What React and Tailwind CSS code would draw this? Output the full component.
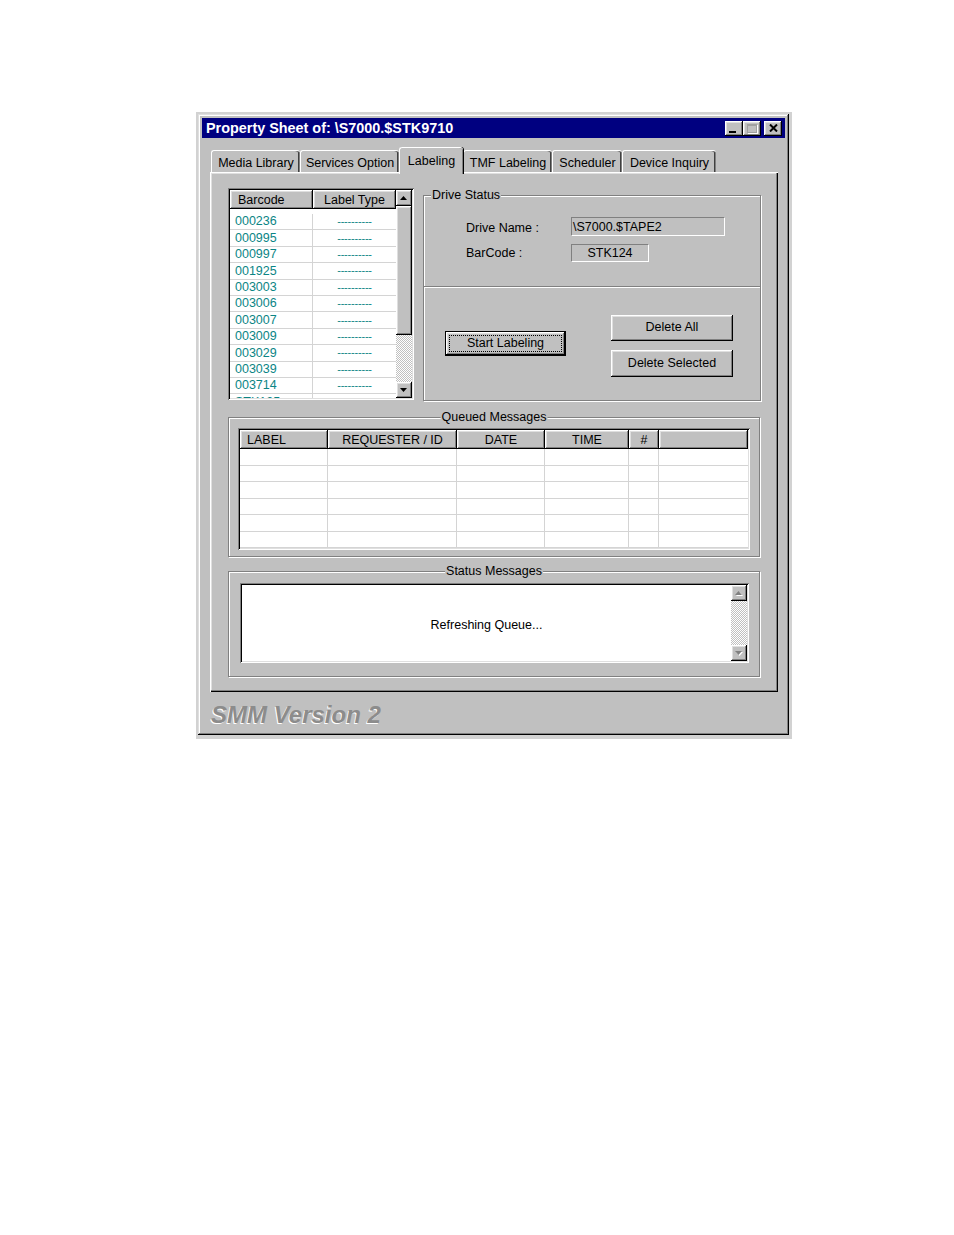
const raised =
  'shadow-[inset_-1px_-1px_0_#000,inset_1px_1px_0_#fff,inset_-2px_-2px_0_#808080,inset_2px_2px_0_#dfdfdf]'
const sunken =
  'shadow-[inset_1px_1px_0_#808080,inset_-1px_-1px_0_#fff,inset_2px_2px_0_#000,inset_-2px_-2px_0_#dfdfdf]'
const etched = 'border border-[#808080] shadow-[inset_1px_1px_0_#fff,1px_1px_0_#fff]'
const dither =
  'bg-[image:repeating-conic-gradient(#c0c0c0_0_25%,#ffffff_0_50%)] bg-[length:2px_2px]'

const tabs = [
  { label: 'Media Library', w: 'w-[89px]' },
  { label: 'Services Option', w: 'w-[99px]' },
  { label: 'Labeling', w: 'w-[64px]', active: true },
  { label: 'TMF Labeling', w: 'w-[89px]' },
  { label: 'Scheduler', w: 'w-[70px]' },
  { label: 'Device Inquiry', w: 'w-[94px]' },
]

const barcodes = [
  '000236', '000995', '000997', '001925', '003003', '003006',
  '003007', '003009', '003029', '003039', '003714', 'STK125',
]

const queuedCols = [
  { label: 'LABEL', w: 'w-[88px]', left: true },
  { label: 'REQUESTER / ID', w: 'w-[129px]' },
  { label: 'DATE', w: 'w-[88px]' },
  { label: 'TIME', w: 'w-[84px]' },
  { label: '#', w: 'w-[30px]' },
  { label: '', w: 'flex-1' },
]

function Arrow({ up, disabled }) {
  const d = up ? 'M3.5 0L7 4H0z' : 'M0 0h7L3.5 4z'
  return (
    <svg width="8" height="5" viewBox="0 0 8 5">
      {disabled && <path d={d} transform="translate(1 1)" fill="#fff" />}
      <path d={d} fill={disabled ? '#808080' : '#000'} />
    </svg>
  )
}

function ScrollBtn({ up, disabled }) {
  return (
    <div className={`flex h-[16px] w-[16px] shrink-0 items-center justify-center bg-[#c0c0c0] ${raised}`}>
      <Arrow up={up} disabled={disabled} />
    </div>
  )
}

function GroupBox({ title, center, className, children }) {
  return (
    <div className={`relative ${etched} ${className}`}>
      <span
        className={`absolute -top-[9px] bg-[#c0c0c0] px-[1px] leading-[16px] ${
          center ? 'left-1/2 -translate-x-1/2' : 'left-[7px]'
        }`}
      >
        {title}
      </span>
      {children}
    </div>
  )
}

function Button({ children, className, isDefault }) {
  if (isDefault) {
    return (
      <div className={`flex border border-black bg-[#c0c0c0] ${className}`}>
        <div className={`flex flex-1 p-[3px] ${raised}`}>
          <div className="flex flex-1 items-center justify-center border border-dotted border-black">
            {children}
          </div>
        </div>
      </div>
    )
  }
  return (
    <div className={`flex items-center justify-center bg-[#c0c0c0] ${raised} ${className}`}>
      {children}
    </div>
  )
}

function TitleBar() {
  return (
    <div className="flex h-[20px] items-center justify-between bg-[#000080] pl-[4px] pr-[3px]">
      <span className="text-[14.4px] font-bold leading-none text-white">
        Property Sheet of: \S7000.$STK9710
      </span>
      <div className="flex items-center">
        <div className={`flex h-[15px] w-[18px] items-end bg-[#c0c0c0] pb-[3px] pl-[4px] ${raised}`}>
          <div className="h-[2px] w-[7px] bg-black" />
        </div>
        <div className={`flex h-[15px] w-[18px] items-center justify-center bg-[#c0c0c0] ${raised}`}>
          <div className="h-[9px] w-[10px] border border-t-2 border-[#a0a0a0] shadow-[1px_1px_0_#fff]" />
        </div>
        <div className={`ml-[3px] flex h-[15px] w-[18px] items-center justify-center bg-[#c0c0c0] ${raised}`}>
          <svg width="9" height="8" viewBox="0 0 9 8">
            <path d="M1 0.5L8 7.5M8 0.5L1 7.5" stroke="#000" strokeWidth="2" />
          </svg>
        </div>
      </div>
    </div>
  )
}

function Tabs() {
  return (
    <div className="ml-[9px] mt-[9px] flex h-[25px] items-end">
      {tabs.map((t) =>
        t.active ? (
          <div
            key={t.label}
            className={`relative z-10 -mb-[2px] flex h-[27px] items-start justify-center rounded-t-[3px] border-l border-t border-white bg-[#c0c0c0] pt-[4px] shadow-[inset_-1px_0_0_#808080,1px_0_0_#000] ${t.w}`}
          >
            {t.label}
          </div>
        ) : (
          <div
            key={t.label}
            className={`flex h-[22px] items-center justify-center rounded-t-[3px] border-l border-t border-white bg-[#c0c0c0] pt-[3px] shadow-[inset_-1px_0_0_#808080,inset_-2px_0_0_#404040] ${t.w}`}
          >
            {t.label}
          </div>
        )
      )}
    </div>
  )
}

function BarcodeList() {
  return (
    <div className={`flex h-[212px] w-[186px] shrink-0 bg-white p-[2px] ${sunken}`}>
      <div className="flex w-[166px] flex-col overflow-hidden">
        <div className="flex h-[19px] shrink-0">
          <div className={`flex w-[83px] items-center bg-[#c0c0c0] pl-[8px] pt-[2px] ${raised}`}>Barcode</div>
          <div className={`flex w-[83px] items-center justify-center bg-[#c0c0c0] pt-[2px] ${raised}`}>Label Type</div>
        </div>
        <div className="pt-[5px]">
          {barcodes.map((b) => (
            <div key={b} className="flex h-[16.4px] border-b border-[#d4d4d4] text-[#0b8585]">
              <div className="flex w-[83px] items-center border-r border-[#d4d4d4] pl-[5px] leading-none">{b}</div>
              <div className="flex w-[83px] items-center justify-center text-[11px] leading-none tracking-[-0.2px]">
                ----------
              </div>
            </div>
          ))}
        </div>
      </div>
      <div className="flex w-[16px] flex-col">
        <ScrollBtn up />
        <div className={`h-[129px] bg-[#c0c0c0] ${raised}`} />
        <div className={`flex-1 ${dither}`} />
        <ScrollBtn />
      </div>
    </div>
  )
}

function DriveStatus() {
  return (
    <div className={`relative ml-[9px] mt-[7px] flex h-[206px] w-[338px] flex-col ${etched}`}>
      <span className="absolute -top-[9px] left-[7px] bg-[#c0c0c0] px-[1px] leading-[16px]">Drive Status</span>
      <div className="h-[91px] border-b border-[#808080] shadow-[0_1px_0_#fff]">
        <div className="grid grid-cols-[105px_auto] gap-y-[8px] pl-[42px] pt-[21px]">
          <div className="flex h-[19px] items-center pt-[3px]">Drive Name :</div>
          <div className="flex h-[19px] w-[154px] items-center border border-b-white border-l-[#808080] border-r-white border-t-[#808080] pl-[1px] pt-[1px]">
            \S7000.$TAPE2
          </div>
          <div className="flex h-[18px] items-center">BarCode :</div>
          <div className="flex h-[18px] w-[78px] items-center justify-center border border-b-white border-l-[#808080] border-r-white border-t-[#808080] pt-[1px]">
            STK124
          </div>
        </div>
      </div>
      <div className="flex flex-1 items-center justify-between pl-[21px] pr-[27px] pt-[1px]">
        <Button isDefault className="mt-[-2px] h-[25px] w-[121px]">
          Start Labeling
        </Button>
        <div className="mt-[3px] flex flex-col gap-[9px]">
          <Button className="h-[26px] w-[122px]">Delete All</Button>
          <Button className="h-[27px] w-[122px]">Delete Selected</Button>
        </div>
      </div>
    </div>
  )
}

function QueuedMessages() {
  return (
    <GroupBox title="Queued Messages" center className="mt-[16px] h-[140px] w-[532px] pl-[9px] pt-[10px]">
      <div className={`flex h-[122px] w-[512px] flex-col bg-white p-[2px] ${sunken}`}>
        <div className="flex h-[19px] shrink-0">
          {queuedCols.map((c) => (
            <div
              key={c.label || 'blank'}
              className={`flex items-center bg-[#c0c0c0] pt-[1px] ${raised} ${c.w} ${c.left ? 'pl-[7px]' : 'justify-center'}`}
            >
              {c.label}
            </div>
          ))}
        </div>
        {[0, 1, 2, 3, 4, 5].map((r) => (
          <div key={r} className="flex h-[16.5px] border-b border-[#d4d4d4]">
            {queuedCols.map((c, i) => (
              <div
                key={i}
                className={`${c.w} ${i < queuedCols.length - 1 ? 'border-r border-[#d4d4d4]' : ''}`}
              />
            ))}
          </div>
        ))}
      </div>
    </GroupBox>
  )
}

function StatusMessages() {
  return (
    <GroupBox title="Status Messages" center className="mt-[14px] h-[106px] w-[532px] pl-[11px] pt-[11px]">
      <div className={`flex h-[80px] w-[509px] bg-white p-[2px] ${sunken}`}>
        <div className="flex flex-1 items-center justify-center pt-[4px]">Refreshing Queue...</div>
        <div className="flex w-[16px] flex-col">
          <ScrollBtn up disabled />
          <div className={`flex-1 ${dither}`} />
          <ScrollBtn disabled />
        </div>
      </div>
    </GroupBox>
  )
}

export default function App() {
  return (
    <div className="min-h-[1235px] bg-white pl-[196px] pt-[112px] font-['Liberation_Sans',Arial,sans-serif] text-[12.5px] text-black">
      <div className="w-[596px] bg-[#d2d2d2] pb-[4px] pl-[2px] pr-[3px] pt-[2px]">
        <div className="h-[621px] bg-[#c0c0c0] p-[4px] shadow-[inset_-1px_-1px_0_#000,inset_1px_1px_0_#dfdfdf,inset_-2px_-2px_0_#808080,inset_2px_2px_0_#fff]">
          <TitleBar />
          <Tabs />
          <div className="ml-[8px] flex h-[520px] w-[568px] flex-col bg-[#c0c0c0] pl-[18px] pt-[16px] shadow-[inset_1px_1px_0_#fff,inset_-1px_-1px_0_#000,inset_-2px_-2px_0_#808080,inset_2px_2px_0_#dfdfdf]">
            <div className="flex items-start">
              <BarcodeList />
              <DriveStatus />
            </div>
            <QueuedMessages />
            <StatusMessages />
          </div>
          <div className="ml-[9px] mt-[11px] text-[24px] font-bold italic leading-[24px] text-[#8c8c8c] [text-shadow:-1px_1px_0_#fff]">
            SMM Version 2
          </div>
        </div>
      </div>
    </div>
  )
}
